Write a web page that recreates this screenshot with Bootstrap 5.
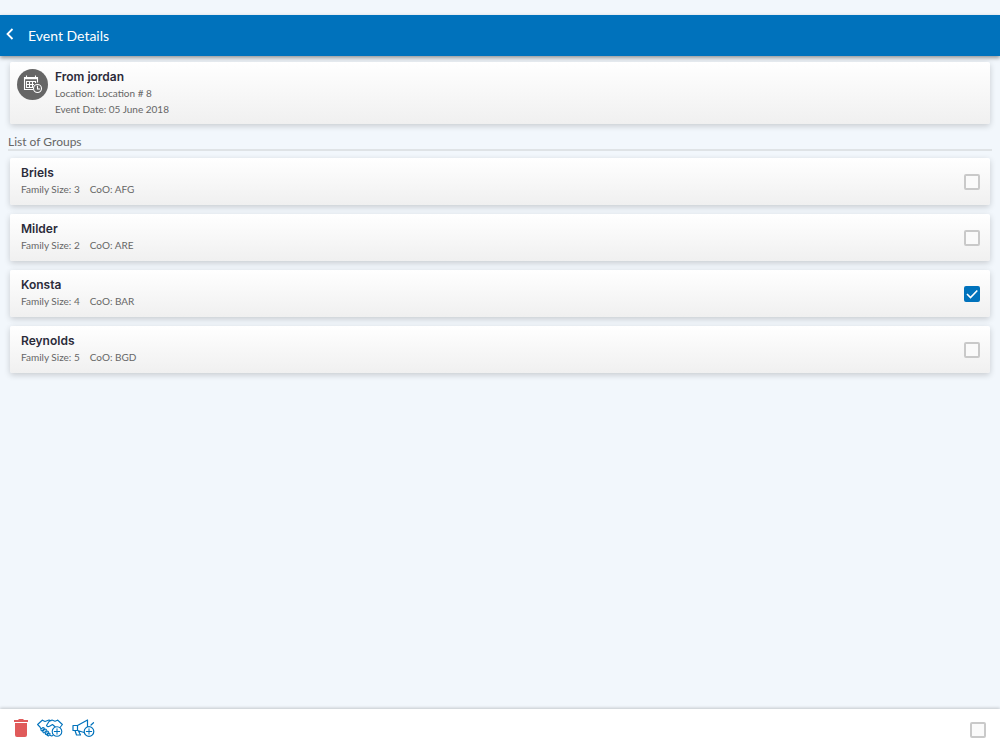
<!DOCTYPE html>
<html lang="en">
<head>
<meta charset="utf-8">
<meta name="viewport" content="width=device-width, initial-scale=1">
<title>Event Details</title>
<link href="https://cdn.jsdelivr.net/npm/bootstrap@5.3.0/dist/css/bootstrap.min.css" rel="stylesheet">
<style>
body { background: #f2f7fc; color: #666; font-family: Lato, sans-serif; font-size: 10px; line-height: 16px; padding-top: 15px; }
.topbar { background: #0072bc; height: 41px; box-shadow: 0 2px 4px rgba(0,0,0,.4); padding-left: 5px; gap: 14px; }
.topbar h1 { font-size: 14px; line-height: 20px; }
.back-btn { width: 9px; height: 14px; margin-bottom: 4px; }
.content { padding: 6px 8px; }
.panel { background: linear-gradient(#fff, #f0f0f0); border-radius: 2px; box-shadow: 0 2px 6px rgba(0,0,0,.18); margin: 0 2px; }
.event-panel { min-height: 62px; padding: 6px 7px; gap: 7px; }
.event-icon { margin-top: 1px; }
.item-name { color: #2b2b3a; font-family: Inter, sans-serif; font-size: 12px; line-height: 17px; font-weight: 600; }
.section-title { font-size: 12px; line-height: 15px; margin-top: 10px; border-bottom: 2px solid #dfe3e6; }
.group-list { gap: 9px; padding-top: 7px; }
.group-item { height: 47px; padding: 0 10px 2px 11px; }
.tick.form-check-input { width: 16px; height: 16px; border: 2px solid #c9c9c9; border-radius: 2px; background-color: #fafafa; }
.group-item .tick { margin-top: 2px !important; }
.tick.form-check-input:checked { background-color: #0072bc; border-color: #0072bc; background-size: 12px; background-image: url("data:image/svg+xml,%3csvg xmlns='http://www.w3.org/2000/svg' viewBox='0 0 12 12'%3e%3cpath fill='none' stroke='%23fff' stroke-width='1.6' d='M1 6l3.500 3.500L11.300 2.500'/%3e%3c/svg%3e"); }
.meta { gap: 10px; }
.toolbar { background: #fff; height: 41px; padding: 0 14px; box-shadow: 0 -1px 3px rgba(0,0,0,.2); }
.tools { gap: 9px; padding-bottom: 4px; }
</style>
</head>
<body class="d-flex flex-column min-vh-100">
<header class="topbar d-flex align-items-center text-white">
  <button type="button" class="back-btn btn p-0 border-0 d-flex" aria-label="Back">
    <svg width="9" height="14" viewBox="0 0 9 14" fill="none" stroke="#fff" stroke-width="1.800"><path d="M7.500 2 2.500 7l5 5"/></svg>
  </button>
  <h1 class="fw-normal mb-0">Event Details</h1>
</header>
<main class="content flex-grow-1">
  <section class="panel event-panel d-flex align-items-start">
    <svg class="event-icon flex-shrink-0" width="31" height="31" viewBox="0 0 31 31" fill="none" aria-hidden="true">
      <circle cx="15.5" cy="15.5" r="15.5" fill="#666"/>
      <g stroke="#fff" stroke-width="1.1">
        <path d="M16 20.5H7.5V8.500h13v5M9.500 6.500V10M18.500 6.500V10"/>
        <path d="M9 12.500h9.500M9 15.500h8M9 18.500h7M9.500 12v7M12.500 12v7M15.500 12v7M18.500 12v2"/>
        <circle cx="20.500" cy="19.500" r="4" fill="#666"/>
        <path d="M20.500 16.800V20h2.500"/>
      </g>
      <path d="M7.500 9.500h13" stroke="#fff" stroke-width="1.500"/>
    </svg>
    <div>
      <h2 class="item-name mb-0">From jordan</h2>
      <div>Location: Location # 8</div>
      <div>Event Date: 05 June 2018</div>
    </div>
  </section>
  <h2 class="section-title fw-normal mb-0">List of Groups</h2>
  <div class="group-list d-flex flex-column">
    <div class="panel group-item d-flex align-items-center justify-content-between">
      <label for="g1"><span class="item-name d-block">Briels</span><span class="meta d-flex"><span>Family Size: 3</span><span>CoO: AFG</span></span></label>
      <input class="tick form-check-input m-0" type="checkbox" id="g1">
    </div>
    <div class="panel group-item d-flex align-items-center justify-content-between">
      <label for="g2"><span class="item-name d-block">Milder</span><span class="meta d-flex"><span>Family Size: 2</span><span>CoO: ARE</span></span></label>
      <input class="tick form-check-input m-0" type="checkbox" id="g2">
    </div>
    <div class="panel group-item d-flex align-items-center justify-content-between">
      <label for="g3"><span class="item-name d-block">Konsta</span><span class="meta d-flex"><span>Family Size: 4</span><span>CoO: BAR</span></span></label>
      <input class="tick form-check-input m-0" type="checkbox" id="g3" checked>
    </div>
    <div class="panel group-item d-flex align-items-center justify-content-between">
      <label for="g4"><span class="item-name d-block">Reynolds</span><span class="meta d-flex"><span>Family Size: 5</span><span>CoO: BGD</span></span></label>
      <input class="tick form-check-input m-0" type="checkbox" id="g4">
    </div>
  </div>
</main>
<footer class="toolbar d-flex align-items-center justify-content-between">
  <div class="tools d-flex align-items-center">
    <button type="button" class="btn p-0 border-0 d-flex" aria-label="Delete">
      <svg width="14" height="18" viewBox="0 0 14 18" fill="#e05a5a"><path d="M0 1h4l1-1h4l1 1h4v2H0zM1 4h12v12q0 2-2 2H3q-2 0-2-2z"/></svg>
    </button>
    <button type="button" class="btn p-0 border-0 d-flex" aria-label="Add assistance">
      <svg width="26" height="18" viewBox="0 0 26 18" fill="none" stroke="#0072bc" stroke-width="1.100" stroke-linejoin="round" stroke-linecap="round">
        <path d="M5.500 1 .6 5.500 3 8l1 2M5.500 1.200 8 2.500l4-1.500 2 .7M20.500 1l4.900 4.500-2.400 3M20.500 1.200 18 2.200l-3-1.200-3 1.500-2.500 4q1 2 3.500.5l2.500-1.500 4.500 4M4 10l2-1.500q1.500 0 1 1.500l-2 2q-1.500-.5-1-2M6 12l2-2q1.800 0 1.200 1.500L7 14q-1.500-.5-1-2M8.500 14l1.700-2q1.500 0 1 1.500l-1.700 2q-1.500 0-1-1.500M10.500 15.500l1.500-1.500q1.500.5.800 1.500L11.500 17l-1.500-.8M12.500 16l2 1 1.500-.5"/>
        <circle cx="20" cy="12.500" r="4.800" fill="#fff"/><path stroke-width="1" d="M20 9.800v5.400M17.300 12.500h5.400"/>
      </svg>
    </button>
    <button type="button" class="btn p-0 border-0 d-flex" aria-label="Add announcement">
      <svg width="23" height="18" viewBox="0 0 23 18" fill="none" stroke="#0072bc" stroke-width="1.200" stroke-linejoin="round" stroke-linecap="round">
        <path d="M1 6.500h4.500L15.500 1v13.500L5.500 11.500H1zM5.500 6.500v5M3 11.500l1.500 4.500h4L6.500 12M19 6l2.500-2.300"/>
        <circle cx="17" cy="12.500" r="4.800" fill="#fff"/><path stroke-width="1" d="M17 9.800v5.400M14.300 12.500h5.400"/>
      </svg>
    </button>
  </div>
  <input class="tick form-check-input m-0" type="checkbox" aria-label="Select all">
</footer>
<script src="https://cdn.jsdelivr.net/npm/bootstrap@5.3.0/dist/js/bootstrap.bundle.min.js"></script>
</body>
</html>
